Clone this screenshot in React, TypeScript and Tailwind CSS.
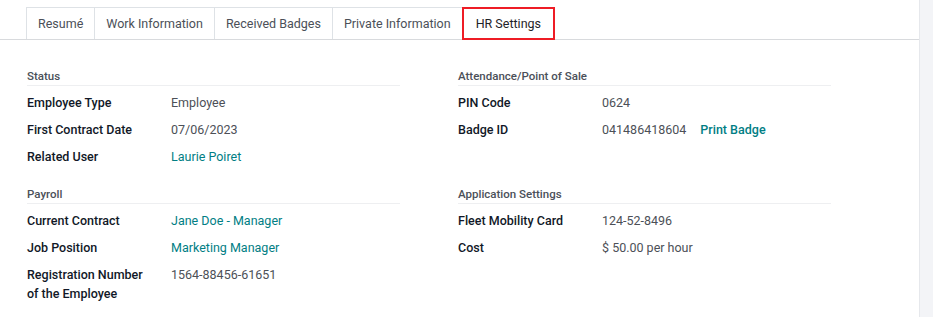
import React from "react";

type Row = { label: string; value: string; link?: boolean; extra?: string };
type Section = { title: string; rows: Row[] };

const tabs = ["Resumé", "Work Information", "Received Badges", "Private Information", "HR Settings"];

const sections: Section[] = [
  {
    title: "Status",
    rows: [
      { label: "Employee Type", value: "Employee" },
      { label: "First Contract Date", value: "07/06/2023" },
      { label: "Related User", value: "Laurie Poiret", link: true },
    ],
  },
  {
    title: "Attendance/Point of Sale",
    rows: [
      { label: "PIN Code", value: "0624" },
      { label: "Badge ID", value: "041486418604", extra: "Print Badge" },
    ],
  },
  {
    title: "Payroll",
    rows: [
      { label: "Current Contract", value: "Jane Doe - Manager", link: true },
      { label: "Job Position", value: "Marketing Manager", link: true },
      { label: "Registration Number of the Employee", value: "1564-88456-61651" },
    ],
  },
  {
    title: "Application Settings",
    rows: [
      { label: "Fleet Mobility Card", value: "124-52-8496" },
      { label: "Cost", value: "$ 50.00 per hour" },
    ],
  },
];

const FormSection = ({ section }: { section: Section }) => (
  <div className="mb-[12px]">
    <div className="text-[11.5px] leading-[17px] font-medium text-[#4b5059] border-b border-[#eeeff1]">
      {section.title}
    </div>
    <div className="mt-[7px]">
      {section.rows.map((row) => (
        <div key={row.label} className="flex mb-[8px] text-[12.5px] leading-[19px]">
          <div className="w-[144px] pr-[22px] font-medium text-[#111827]">{row.label}</div>
          <div className={row.link ? "text-[#017e84]" : "text-[#4c5057]"}>{row.value}</div>
          {row.extra && <div className="ml-[14px] font-medium text-[#017e84]">{row.extra}</div>}
        </div>
      ))}
    </div>
  </div>
);

export default function App() {
  return (
    <div
      className="flex w-[933px] h-[317px] bg-white overflow-hidden"
      style={{ fontFamily: "Roboto, 'Liberation Sans', sans-serif" }}
    >
      <div className="w-[919px] shrink-0">
        {/* tabs */}
        <div className="flex pl-[26px] pt-[7px] border-b border-[#d8dadd]">
          {tabs.map((tab) => {
            const active = tab === "HR Settings";
            return (
              <div
                key={tab}
                className={
                  active
                    ? "h-[33px] px-[12px] pt-[1px] -mb-px flex items-center text-[12.5px] text-[#1f2328] bg-white border-2 border-[#ee1c25]"
                    : "h-[32px] px-[11px] pt-[2px] flex items-center text-[12.5px] text-[#4b5058] border-t border-l border-[#dee2e6]"
                }
              >
                {tab}
              </div>
            );
          })}
        </div>

        {/* form */}
        <div className="grid grid-cols-[373px_373px] gap-x-[58px] pl-[27px] pt-[28px]">
          {sections.map((s) => (
            <FormSection key={s.title} section={s} />
          ))}
        </div>
      </div>
      <div className="flex-1 bg-[#f3f4f7] border-l border-[#e6e8ec]" />
    </div>
  );
}
